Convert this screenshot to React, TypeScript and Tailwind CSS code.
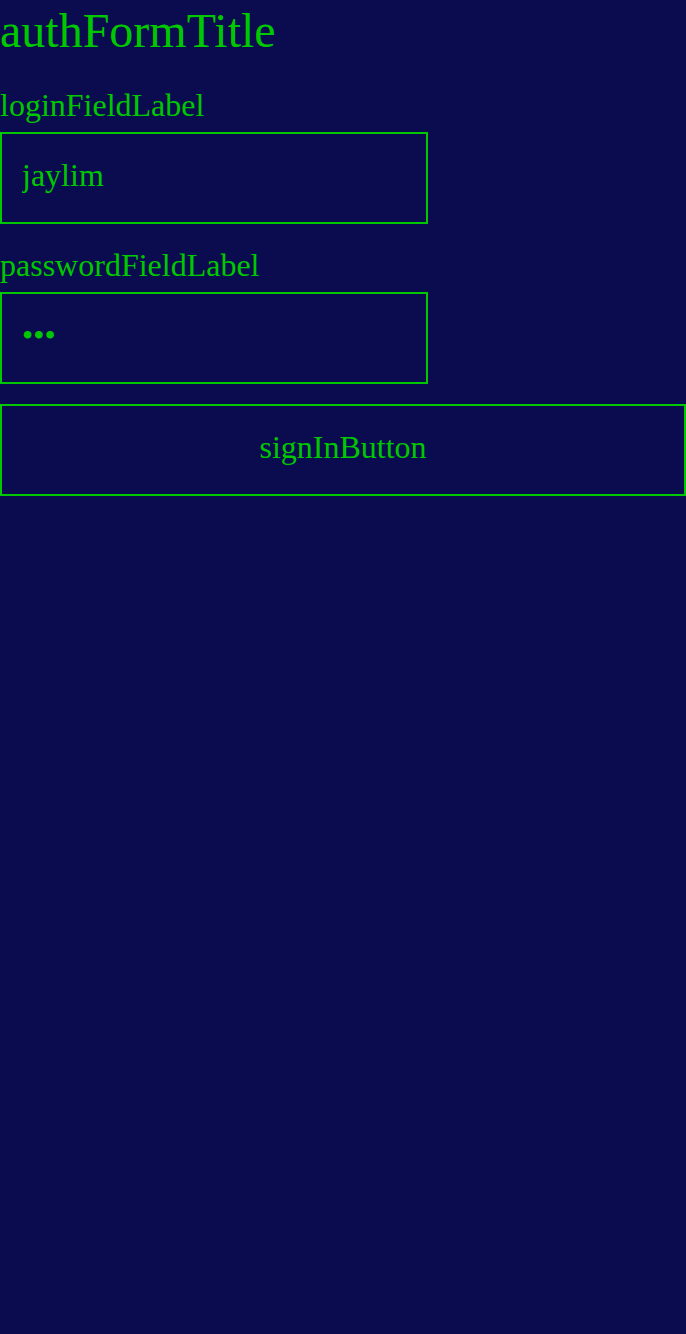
export default function App() {
  return (
    <div className="min-h-[1334px] w-full bg-[#0b0b4f] text-[#00c800] [font-family:'Liberation_Serif',serif]">
      <h1 className="pt-[3px] text-[48px] leading-[55px] font-normal">authFormTitle</h1>
      <form className="flex flex-col" onSubmit={(e) => e.preventDefault()}>
        <label htmlFor="login" className="mt-[29px] text-[32px] leading-[37px]">
          loginFieldLabel
        </label>
        <input
          id="login"
          type="text"
          defaultValue="jaylim"
          className="mt-[8px] h-[92px] w-[428px] border-2 border-[#00c800] bg-transparent px-[20px] pb-[6px] text-[32px] text-[#00c800] outline-none [font-family:'Liberation_Serif',serif]"
        />
        <label htmlFor="password" className="mt-[23px] text-[32px] leading-[37px]">
          passwordFieldLabel
        </label>
        <input
          id="password"
          type="password"
          defaultValue="abc"
          className="mt-[8px] h-[92px] w-[428px] border-2 border-[#00c800] bg-transparent px-[20px] pb-[6px] text-[32px] text-[#00c800] outline-none [font-family:'Liberation_Serif',serif]"
        />
        <button
          type="submit"
          className="mt-[20px] h-[92px] w-full border-2 border-[#00c800] bg-transparent pb-[6px] text-[32px] text-[#00c800] [font-family:'Liberation_Serif',serif]"
        >
          signInButton
        </button>
      </form>
    </div>
  );
}
